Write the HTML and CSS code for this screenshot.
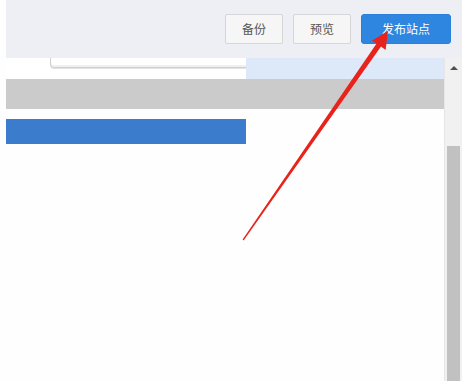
FILE: index.html
```html
<!DOCTYPE html>
<html lang="zh">
<head>
<meta charset="utf-8">
<link rel="stylesheet" href="styles.css">
</head>
<body>
<div class="page">
  <div class="header">
    <button class="btn btn-gray">备份</button>
    <button class="btn btn-gray">预览</button>
    <button class="btn btn-blue">发布站点</button>
  </div>
  <div class="body">
    <div class="main">
      <div class="row1">
        <div class="row1-left"><div class="input-edge"></div></div>
        <div class="row1-right"></div>
      </div>
      <div class="gray-bar"></div>
      <div class="blue-bar"></div>
    </div>
    <div class="scroll">
      <div class="scroll-up"></div>
      <div class="thumb"></div>
    </div>
  </div>
</div>
<svg class="arrow" width="462" height="381" viewBox="0 0 462 381">
  <polygon points="388,31 385.6,50 381,46.6 243.6,240.4 242.6,239.6 376.6,43.6 371.8,40.8" fill="#e8231c"/>
</svg>
</body>
</html>
```
FILE: styles.css
```css
html, body {
  margin: 0;
  padding: 0;
}
body {
  width: 462px;
  height: 381px;
  overflow: hidden;
  background: #fefefe;
  font-family: "Noto Sans CJK SC", "Liberation Sans", sans-serif;
  position: relative;
}
.page {
  padding-left: 6px;
}
.header {
  height: 58px;
  box-sizing: border-box;
  background: #edeff4;
  display: flex;
  justify-content: flex-end;
  align-items: flex-start;
  gap: 10px;
  padding-top: 14px;
  padding-right: 11px;
}
.btn {
  height: 30px;
  box-sizing: border-box;
  font-family: inherit;
  font-size: 12px;
  line-height: 1;
  padding: 0;
  border-radius: 2px;
  cursor: pointer;
}
.btn-gray {
  width: 58px;
  background: #f6f6f6;
  border: 1px solid #d6d6d8;
  color: #555;
}
.btn-blue {
  width: 90px;
  background: #2f86e0;
  border: 1px solid #2a80da;
  color: #fff;
  border-radius: 3px;
}
.body {
  display: flex;
  height: 323px;
}
.main {
  width: 438px;
}
.row1 {
  display: flex;
  height: 21px;
}
.row1-left {
  width: 240px;
  background: #fff;
  padding-left: 44px;
  box-sizing: border-box;
}
.input-edge {
  height: 9px;
  border: 1px solid #cfcfd2;
  border-top: none;
  border-right: none;
  border-radius: 0 0 0 4px;
  box-shadow: inset 0 -2px 0 #f0f0f2, 0 1px 0 #e4e4e6;
}
.row1-right {
  flex: 1;
  background: #dde8f8;
}
.gray-bar {
  height: 30px;
  background: #cbcbcb;
}
.blue-bar {
  margin-top: 10px;
  width: 240px;
  height: 25px;
  background: #3b7dcc;
}
.scroll {
  width: 18px;
  background: #f1f1f1;
  border-left: 1px solid #e6e6e6;
  box-sizing: border-box;
  display: flex;
  flex-direction: column;
  align-items: center;
}
.scroll-up {
  margin-top: 8px;
  width: 0;
  height: 0;
  border-left: 4px solid transparent;
  border-right: 4px solid transparent;
  border-bottom: 4px solid #505050;
}
.thumb {
  margin-top: 76px;
  width: 13px;
  flex: 1;
  background: #c1c1c1;
}
.arrow {
  position: absolute;
  left: 0;
  top: 0;
  pointer-events: none;
}
```
